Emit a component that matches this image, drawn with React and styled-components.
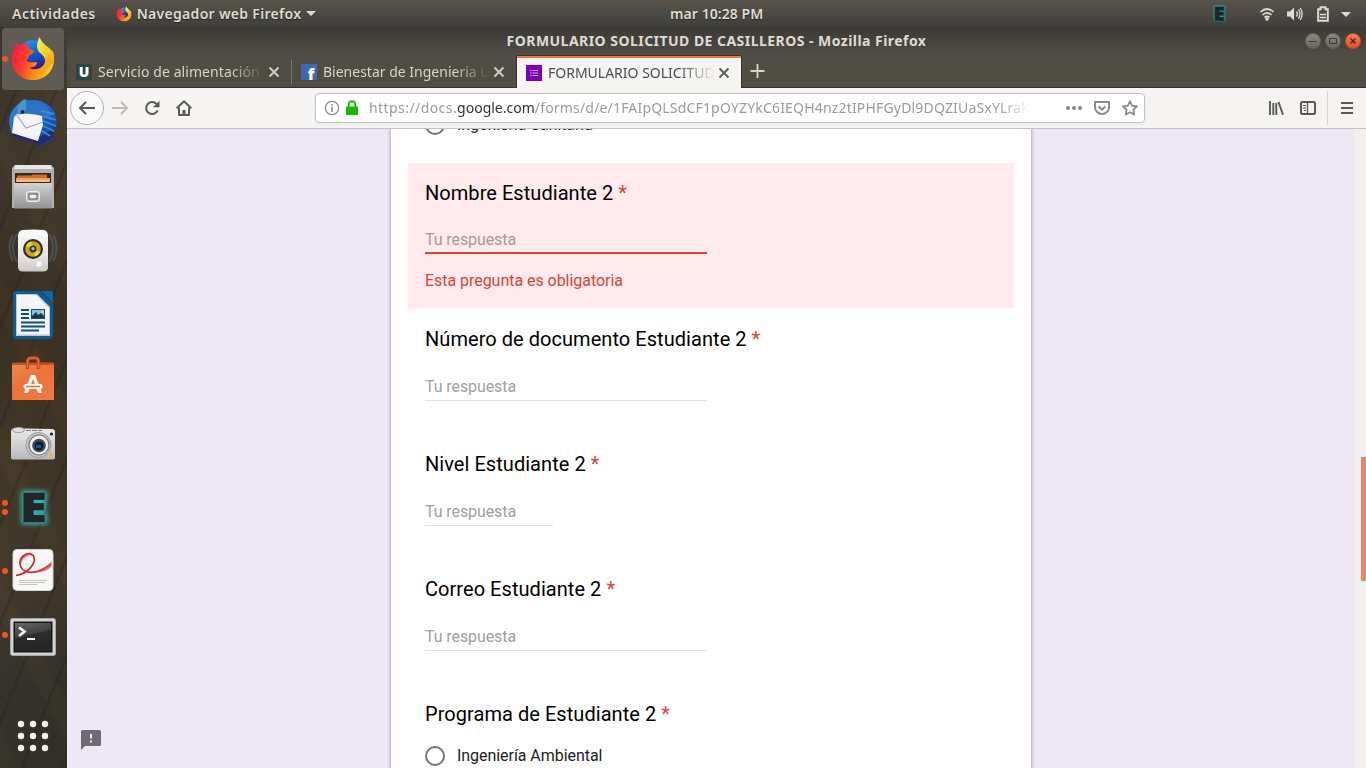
import React from "react";
import styled, { createGlobalStyle } from "styled-components";

const GlobalStyle = createGlobalStyle`
  * { box-sizing: border-box; }
  html, body { margin: 0; padding: 0; overflow: hidden; }
  body { font-family: "Noto Sans", "Open Sans", sans-serif; }
  svg { display: block; flex: none; overflow: visible; }
`;

const Desktop = styled.div`
  display: flex;
  flex-direction: column;
  width: 1366px;
  height: 768px;
  overflow: hidden;
  background: #3d362c;
`;

const TopPanel = styled.header`
  display: grid;
  grid-template-columns: 670px auto 1fr;
  flex: none;
  height: 27px;
  align-items: center;
  background: linear-gradient(#59554c, #403f3a);
  color: #dfdbd2;
  font-size: 14px;
  font-weight: 600;
  line-height: 26px;
  text-shadow: 0 1px 1px rgba(0, 0, 0, 0.5);
`;

const PanelLeft = styled.div`
  display: flex;
  align-items: center;
  padding-left: 12px;
`;

const PanelRight = styled.div`
  display: flex;
  justify-content: flex-end;
  padding-right: 14px;
`;

const Label = styled.span`
  white-space: nowrap;
  letter-spacing: ${(p) => p.$track || 0}px;
`;

const AppMenu = styled.div`
  display: flex;
  align-items: center;
  gap: 5px;
  margin-left: 20px;
`;

const Workspace = styled.div`
  display: flex;
  flex: 1;
  min-height: 0;
`;

const Dock = styled.nav`
  display: flex;
  flex-direction: column;
  width: 67px;
  background: repeating-linear-gradient(112deg, rgba(20, 16, 10, 0.16) 0 2px, transparent 4px 37px),
    repeating-linear-gradient(62deg, rgba(110, 82, 46, 0.1) 0 14px, transparent 22px 71px),
    linear-gradient(100deg, rgba(20, 18, 14, 0.15), transparent 45%, rgba(20, 18, 14, 0.15)),
    linear-gradient(#453e33 0%, #43392c 22%, #3b3124 38%, #423727 60%, #443a2c 76%, #36352d 88%, #35332c 100%);
`;

const DockItem = styled.div`
  display: flex;
  align-items: center;
  height: 64px;
  flex: none;
  margin-top: ${(p) => p.$gap || 0}px;
`;

const DockTile = styled.div`
  display: flex;
  align-items: center;
  justify-content: center;
  position: relative;
  width: 62px;
  height: 62px;
  margin: 0 3px 0 2px;
  border-radius: 4px;
  background: ${(p) => (p.$active ? "#605c56" : "transparent")};
`;

const Dots = styled.div`
  position: absolute;
  left: 0;
  top: 0;
  height: 62px;
  display: flex;
  flex-direction: column;
  justify-content: center;
  gap: 3px;
`;

const Dot = styled.i`
  width: 6px;
  height: 6px;
  border-radius: 50%;
  background: #f05423;
`;

const Window = styled.main`
  display: flex;
  flex-direction: column;
  flex: 1;
  min-width: 0;
`;

const TitleBar = styled.div`
  display: flex;
  align-items: center;
  height: 28px;
  flex: none;
  background: linear-gradient(#3b3a36, #504d45);
  color: #dfdbd2;
  font-size: 14px;
  font-weight: 700;
`;

const WindowTitle = styled.div`
  flex: 1;
  padding-left: 61px;
  text-align: center;
  line-height: 28px;
`;

const WindowButtons = styled.div`
  display: flex;
  gap: 4px;
  padding: 0 5px 0 0;
`;

const WindowButton = styled.div`
  width: 16px;
  height: 16px;
  border-radius: 50%;
  border: 1px solid ${(p) => (p.$close ? "#ce4a20" : "#66635b")};
  background: ${(p) => (p.$close ? "linear-gradient(#fb8059, #e9501f)" : "linear-gradient(#8b887f, #69665f)")};
`;

const TabStrip = styled.div`
  display: flex;
  height: 33px;
  flex: none;
  background: #504d45;
  border-bottom: 1px solid #34332f;
`;

const Tab = styled.div`
  display: flex;
  align-items: center;
  width: ${(p) => (p.$active ? 224 : 225)}px;
  height: 32px;
  padding: 1px 11px 0 9px;
  color: #d8d4cb;
  ${(p) => p.$active && `
    height: 32px;
    margin-top: 1px;
    padding: 0 10px 1px 9px;
    color: #4c4c4c;
    background: #f5f4f2;
    border-top: 2px solid #f07746;
    box-shadow: 0 -1px #34332f, -1px 0 #34332f, 1px 0 #34332f;
  `}
`;

const TabDivider = styled.i`
  width: 1px;
  height: 24px;
  margin: 5px 0 0 -1px;
  background: #79766e;
`;

const TabTitle = styled.div`
  flex: 1;
  margin-left: 6px;
  overflow: hidden;
  white-space: nowrap;
  font-size: 14px;
  line-height: 22px;
  letter-spacing: ${(p) => p.$track || 0}px;
  mask-image: linear-gradient(to right, #000 calc(100% - 38px), transparent calc(100% - 2px));
`;

const Favicon = styled.div`
  display: flex;
  align-items: flex-end;
  justify-content: center;
  width: 16px;
  height: 16px;
  background: ${(p) => p.$bg};
`;

const Toolbar = styled.div`
  display: flex;
  align-items: center;
  height: 41px;
  flex: none;
  background: #f5f4f2;
  border-bottom: 1px solid #c6c3bf;
  color: #5a5955;
`;

const BackButton = styled.div`
  display: flex;
  align-items: center;
  justify-content: center;
  width: 34px;
  height: 34px;
  margin-left: 3px;
  border-radius: 50%;
  border: 1px solid #b3b0ac;
  background: #fbfafa;
`;

const ToolButton = styled.div`
  display: flex;
  align-items: center;
  justify-content: center;
  width: 32px;
  height: 32px;
  color: ${(p) => (p.$disabled ? "#bdbbb8" : "inherit")};
`;

const UrlBar = styled.div`
  display: flex;
  align-items: center;
  gap: 5px;
  width: 830px;
  height: 30px;
  margin-left: 115px;
  padding: 0 6px 0 8px;
  background: #fff;
  border: 1px solid #c5c2be;
  border-radius: 4px;
  box-shadow: 0 1px 3px rgba(0, 0, 0, 0.06);
`;

const Url = styled.div`
  display: flex;
  width: 661px;
  margin-left: 5px;
  overflow: hidden;
  white-space: nowrap;
  font-size: 14px;
  line-height: 24px;
  color: #9b9b9b;
  mask-image: linear-gradient(to right, #000 calc(100% - 30px), transparent);
  b { font-weight: 400; color: #2e3436; }
`;

const UrlActions = styled.div`
  display: flex;
  align-items: center;
  gap: 12px;
  margin-left: auto;
  color: #8a8a8a;
`;

const ToolbarEnd = styled.div`
  display: flex;
  align-items: center;
  margin-left: auto;
  padding-right: 3px;
`;

const ToolDivider = styled.i`
  width: 1px;
  height: 34px;
  margin: 0 3px;
  background: #d7d4d1;
`;

const Viewport = styled.div`
  position: relative;
  display: flex;
  flex: 1;
  min-height: 0;
  background: #ede7f6;
  font-family: Roboto, sans-serif;
`;

const Page = styled.div`
  display: flex;
  flex: 1;
  padding-left: 324px;
  overflow: hidden;
`;

const FormCard = styled.section`
  width: 640px;
  height: 660px;
  margin-top: -10px;
  padding: 10px 17px 0;
  background: #fff;
  box-shadow: 0 1px 4px rgba(40, 20, 70, 0.45);
`;

const ScrollTrack = styled.div`
  display: flex;
  justify-content: flex-end;
  width: 12px;
  background: #f2f1ef;
`;

const ScrollThumb = styled.div`
  width: 5px;
  height: 124px;
  margin-top: 328px;
  background: #ee8562;
`;

const Question = styled.div`
  height: ${(p) => (p.$error ? 145 : 125)}px;
  margin-bottom: ${(p) => (p.$error ? 1 : 0)}px;
  padding: 17px 17px 0;
  background: ${(p) => (p.$error ? "#ffebee" : "transparent")};
`;

const QuestionTitle = styled.h2`
  margin: 0;
  font-size: 20px;
  line-height: 27px;
  font-weight: 400;
  letter-spacing: 0.05px;
  color: #000;
  span { color: #db4437; }
`;

const Answer = styled.div`
  width: ${(p) => p.$width || 282}px;
  height: 26px;
  margin-top: ${(p) => (p.$error ? 21 : 22)}px;
  font-size: 16px;
  line-height: 24px;
  letter-spacing: -0.09px;
  color: ${(p) => (p.$error ? "#a5999b" : "#a1a1a1")};
  border-bottom: ${(p) => (p.$error ? "2px solid #db4437" : "1px solid #e0e0e0")};
`;

const ErrorText = styled.div`
  margin-top: 15px;
  font-size: 16px;
  line-height: 24px;
  letter-spacing: -0.04px;
  color: #db4437;
`;

const Option = styled.div`
  display: flex;
  align-items: center;
  gap: 12px;
  height: 20px;
  margin: ${(p) => p.$margin};
  font-size: 16px;
  line-height: 20px;
  letter-spacing: -0.05px;
  color: #212121;
`;

const Radio = styled.i`
  width: 20px;
  height: 20px;
  border: 2px solid #757575;
  border-radius: 50%;
`;

const Feedback = styled.div`
  position: absolute;
  left: 14px;
  bottom: 18px;
`;

function FirefoxLogo({ size }) {
  return (
    <svg width={size} height={size} viewBox="0 0 48 48">
      <defs>
        <linearGradient id="ffBody" x1="0" y1="0.2" x2="1" y2="0.5">
          <stop offset="0" stopColor="#ff1744" />
          <stop offset="0.35" stopColor="#ff3d2e" />
          <stop offset="0.65" stopColor="#ff8a16" />
          <stop offset="1" stopColor="#ffc81e" />
        </linearGradient>
        <linearGradient id="ffTail" x1="0" y1="0" x2="0.4" y2="1">
          <stop offset="0" stopColor="#fff36b" />
          <stop offset="0.5" stopColor="#ffd62e" />
          <stop offset="1" stopColor="#ff9a12" />
        </linearGradient>
        <linearGradient id="ffGlobe" x1="0.2" y1="0" x2="0.5" y2="1">
          <stop offset="0" stopColor="#16a0f2" />
          <stop offset="0.55" stopColor="#0859d0" />
          <stop offset="1" stopColor="#3a1a78" />
        </linearGradient>
      </defs>
      <circle cx="24" cy="20" r="15.5" fill="url(#ffGlobe)" />
      <path d="M8 6 C8 9 9 9 11 10 C14 8 18 8 20 10 L19 13 L25 15 C25 18 22 19 20 20 C20 22 19 24 17 25 C20 29 25 27 28 27 C29 30 25 33 20 33 C29 38 39 31 38 20 C40 14 45 18 46 24 C46 37 36 46 24 46 C11 46 2 36 2 25 C2 18 3 15 5 13 C5 10 6 8 8 6Z" fill="url(#ffBody)" />
      <path d="M31 1 C27 8 27 15 33 19 C39 24 37 31 31 36 C40 34 46 29 46 20 C46 13 34 11 31 1Z" fill="url(#ffTail)" />
    </svg>
  );
}

function Thunderbird() {
  return (
    <svg width="50" height="50" viewBox="0 0 50 50">
      <defs>
        <linearGradient id="tb" x1="0" y1="0" x2="1" y2="1">
          <stop offset="0" stopColor="#2a8bdc" />
          <stop offset="0.5" stopColor="#1f66be" />
          <stop offset="1" stopColor="#17307e" />
        </linearGradient>
      </defs>
      <path d="M19 1 L19 3 C35 -1 49 10 49 24 C49 29 46 33 43 35 L45 40 C42 42 39 46 31 49 L28 43 C18 42 8 40 3 34 L1 25 C1 14 7 6 19 1Z" fill="url(#tb)" />
      <path d="M5 33 C10 39 28 43 34 38 L44 32 L45 39 L39 43 L31 49 L27 43 C18 44 9 41 5 37Z" fill="#242a73" />
      <path d="M6 19 C9 15 14 14 20 14 L34 18 L35 27 L30 43 L4 35Z" fill="#f4f4f6" />
      <path d="M8 16 L18 30 L35 24" fill="none" stroke="#a5a7ae" strokeWidth="1.2" />
      <path d="M10 15 C10 6 17 0 28 3 C39 4 44 14 43 23 C38 16 29 17 10 15Z" fill="#2d72c4" />
      <path d="M17 1 C10 4 7 11 11 17 C18 15 20 8 17 1Z" fill="#4597d2" />
      <path d="M33 13 L46 16 M34 18 L48 22 M35 23 L48 28 M35 28 L46 33 M34 33 L42 38" stroke="#338fdb" strokeWidth="1.8" />
      <circle cx="14.500" cy="14" r="1.9" fill="#182a3a" />
    </svg>
  );
}

function Files() {
  return (
    <svg width="48" height="48" viewBox="0 0 48 48">
      <defs>
        <linearGradient id="cab" x1="0" y1="0" x2="0" y2="1">
          <stop offset="0" stopColor="#d2d2d2" />
          <stop offset="1" stopColor="#929292" />
        </linearGradient>
      </defs>
      <path d="M6 2h36l3 3v40H3V5Z" fill="#b0b0ae" />
      <path d="M6 2h36l1 4H5Z" fill="#e7e7e6" />
      <path d="M6 10h36v10H6Z" fill="#33271e" />
      <path d="M8 12.500h14l2-1h14v5H8Z" fill="#d36b21" />
      <path d="M7 15h34v4H7Z" fill="#f1a25c" />
      <path d="M8 17.500h32v1H8Z" fill="#f7d9b5" />
      <path d="M5 20h38v25.500H5Z" fill="url(#cab)" />
      <rect x="17.500" y="28.500" width="13" height="10" rx="2" fill="#c5c5c5" stroke="#eeeeee" />
      <rect x="20" y="31" width="8" height="5" fill="#eee" stroke="#555" strokeWidth="1" />
    </svg>
  );
}

function Rhythmbox() {
  return (
    <svg width="56" height="48" viewBox="0 0 56 48">
      <defs>
        <linearGradient id="spk" x1="0" y1="0" x2="0" y2="1">
          <stop offset="0" stopColor="#fbfbfb" />
          <stop offset="0.6" stopColor="#e6e6e4" />
          <stop offset="1" stopColor="#c9c9c7" />
        </linearGradient>
      </defs>
      <g fill="none" stroke="#5e7d9d" strokeWidth="2" opacity="0.38">
        <path d="M12 7 Q4 20 12 35 M8 8 Q1 20 8 34" />
        <path d="M44 7 Q52 20 44 35 M48 8 Q55 20 48 34" />
      </g>
      <path d="M17 3 Q28 2 39 3 Q43 4 43 9 V40 Q43 44.500 38 44.500 H18 Q13 44.500 13 40 V9 Q13 4 17 3Z" fill="url(#spk)" />
      <circle cx="28" cy="22" r="10" fill="#2e2e2c" />
      <circle cx="28" cy="22" r="7.8" fill="#c8a81a" />
      <path d="M28 22 L21 19 A7.6 7.6 0 0 1 26 14.6Z M28 22 L35 25 A7.6 7.6 0 0 1 30 29.4Z" fill="#e9d23c" />
      <circle cx="28" cy="22" r="3.6" fill="#3b3d42" />
      <circle cx="28" cy="21.500" r="1.500" fill="#b9bcc1" />
      <circle cx="34" cy="37" r="3.4" fill="#f8f8f8" stroke="#c5c5c3" strokeWidth="0.7" />
      <rect x="18.500" y="36" width="4" height="4" fill="none" stroke="#d6d6d4" />
    </svg>
  );
}

function Writer() {
  return (
    <svg width="48" height="52" viewBox="0 0 48 52">
      <path d="M7 2 H31 L44 15 V46 Q44 50 40 50 H8 Q4 50 4 46 V5 Q4 2 7 2Z" fill="#0d5d93" />
      <path d="M32 2 H42 Q44 2 44 4 V14Z" fill="#0b6aa8" />
      <path d="M7 5 H28 L41 18 V47 H7Z" fill="#c4c7c9" />
      <path d="M8 6 H27 L40 19 V45.500 H8Z" fill="#f3f4f5" />
      <path d="M12 21h8 M12 25h8 M12 29h8 M12 33.500h24 M12 37.500h24 M12 41.500h18" stroke="#0c4f7f" strokeWidth="1.8" />
      <rect x="22.500" y="20.500" width="13" height="9" fill="#8ac2e6" stroke="#0c4f7f" />
      <path d="M23 29 V27 L27 23 L29 26 L32 24 L35 27 V29Z" fill="#19384f" />
      <circle cx="33.500" cy="22.500" r="1.500" fill="#f4cf43" />
    </svg>
  );
}

function Software() {
  return (
    <svg width="48" height="48" viewBox="0 0 48 48">
      <defs>
        <linearGradient id="bag" x1="0" y1="0" x2="0.7" y2="1">
          <stop offset="0" stopColor="#e48c50" />
          <stop offset="0.5" stopColor="#ee7138" />
          <stop offset="1" stopColor="#f07a42" />
        </linearGradient>
      </defs>
      <path d="M3 8 L6 7.500 H42 L45 8 V45 H3Z" fill="#c94f22" />
      <path d="M3 10 H45 V45 H3Z" fill="url(#bag)" />
      <path d="M18.500 14 V7 Q18.500 3 22 3 H26 Q29.500 3 29.500 7 V14" fill="none" stroke="#b4481d" strokeWidth="3.4" />
      <path d="M18.500 13 V7 Q18.500 3 22 3 H26 Q29.500 3 29.500 7 V13" fill="none" stroke="#e56a3a" strokeWidth="1.6" />
      <text x="24" y="37.500" textAnchor="middle" fontFamily="Lato, sans-serif" fontWeight="900" fontSize="25" fill="#fff">A</text>
      <rect x="14.500" y="29" width="19" height="5" rx="2.400" fill="#fff" />
      <path d="M17 31.500h14" stroke="#e96f3b" strokeWidth="1.600" />
    </svg>
  );
}

function Camera() {
  return (
    <svg width="48" height="48" viewBox="0 0 48 48">
      <defs>
        <linearGradient id="cam" x1="0" y1="0" x2="0" y2="1">
          <stop offset="0" stopColor="#ececec" />
          <stop offset="1" stopColor="#b9b9bb" />
        </linearGradient>
      </defs>
      <path d="M3 10 Q9 7 15 9.500 L43 10 Q46 10 46 13 V38.500 Q46 40.500 43 40.500 H4 Q2 40.500 2 38.500 V12Z" fill="url(#cam)" />
      <ellipse cx="9.500" cy="11" rx="6" ry="2.600" fill="#dedede" stroke="#888" strokeWidth="0.8" />
      <path d="M17 11.500h16" stroke="#77777a" strokeWidth="1.200" strokeDasharray="5 1" />
      <circle cx="29.500" cy="26" r="12.500" fill="#c7c8ca" stroke="#929396" strokeWidth="0.9" />
      <circle cx="30" cy="26" r="10" fill="#eeeeef" stroke="#77797d" strokeWidth="1.200" />
      <circle cx="30" cy="26.500" r="6.800" fill="#454b54" />
      <circle cx="30" cy="27" r="4.500" fill="#101c35" />
      <path d="M27 26h5v3h-5Z" fill="#1d4f9b" />
      <circle cx="42.500" cy="15" r="1.600" fill="#222" />
      <rect x="40" y="34.500" width="3" height="3" fill="#eeb02f" />
    </svg>
  );
}

function GlowE({ size }) {
  return (
    <svg width={size} height={size} viewBox="0 0 48 48">
      <defs>
        <filter id="glow" x="-40%" y="-40%" width="180%" height="180%">
          <feGaussianBlur stdDeviation="2.2" />
        </filter>
      </defs>
      <g transform="translate(24.500 39) scale(1.17 1)" fontFamily="Open Sans, sans-serif" fontWeight="800" fontSize="41" textAnchor="middle">
        <text fill="#2cc5c5" stroke="#2cb5b5" strokeWidth="4.500" filter="url(#glow)">E</text>
        <text fill="#222628" stroke="#222628" strokeWidth="0.7">E</text>
      </g>
    </svg>
  );
}

function DocumentViewer() {
  return (
    <svg width="48" height="48" viewBox="0 0 48 48">
      <rect x="4" y="2.500" width="40" height="41" rx="4" fill="#f7f7f6" stroke="#d5d5d3" />
      <path d="M7 28.500 C18 27 27 17 25 10 C22 3 11 8 11 16 C11 25 24 31 42 17" fill="none" stroke="#d52228" strokeWidth="1.700" />
      <path d="M12 14 C14 7 22 4 25 9 C21 7 14 9 12 17Z M23 25 Q34 25 43 14 L42 20 Q35 27 23 25Z" fill="#df4a4c" opacity="0.75" />
      <path d="M10 33.500h28 M10 35.500h26 M10 37.500h18" stroke="#bcbcba" strokeWidth="0.9" />
    </svg>
  );
}

function Terminal() {
  return (
    <svg width="48" height="48" viewBox="0 0 48 48">
      <defs>
        <linearGradient id="term" x1="0" y1="0" x2="0.3" y2="1">
          <stop offset="0" stopColor="#666" />
          <stop offset="0.48" stopColor="#404142" />
          <stop offset="0.52" stopColor="#2c2d2e" />
          <stop offset="1" stopColor="#252627" />
        </linearGradient>
      </defs>
      <rect x="1.500" y="7.500" width="45" height="37" rx="2" fill="#d3d3d2" stroke="#a5a5a3" />
      <rect x="4.500" y="10.500" width="39" height="31" fill="#161717" />
      <rect x="6" y="12" width="36" height="28" fill="url(#term)" />
      <path d="M10 16.500 L15.500 20.500 L10 25" fill="none" stroke="#f4f4f4" strokeWidth="2.700" />
      <path d="M18 28h8" stroke="#f4f4f4" strokeWidth="2" />
    </svg>
  );
}

function AppGrid() {
  return (
    <svg width="48" height="48" viewBox="0 0 48 48" fill="#f3f2ef">
      {[12, 24, 36].map((y) => [12, 24, 36].map((x) => <circle key={`${x}-${y}`} cx={x} cy={y} r="3.2" />))}
    </svg>
  );
}

const dockApps = [
  { icon: <FirefoxLogo size={46} />, active: true, dots: 1 },
  { icon: <Thunderbird /> },
  { icon: <Files /> },
  { icon: <Rhythmbox /> },
  { icon: <Writer /> },
  { icon: <Software /> },
  { icon: <Camera /> },
  { icon: <GlowE size={48} />, dots: 2 },
  { icon: <DocumentViewer />, dots: 1 },
  { icon: <Terminal />, dots: 1 },
  { icon: <AppGrid />, gap: 37 },
];

function StatusIcons() {
  return (
    <svg width="144" height="26" viewBox="1208 0 144 26">
      <g transform="translate(1209 3)"><GlowE size={20} /></g>
      <g fill="none" stroke="#dfdbd2" strokeWidth="1.700">
        <path d="M1260.500 11 Q1267 5 1273.500 11" />
        <path d="M1262.500 14 Q1267 9.500 1271.500 14" />
        <path d="M1264.500 16.500 Q1267 14.200 1269.500 16.500" />
        <path d="M1296.500 10.500 Q1298.500 13 1296.500 15.700 M1298.500 8.500 Q1301.500 13 1298.500 17.600 M1300.300 7 Q1304 13 1300.300 19" strokeWidth="1.300" />
        <path d="M1318.200 8.200h2.300v-2h5v2h2.300v11.500h-9.600Z" strokeWidth="2" />
        <path d="M1320 13.500h6 M1320 16.500h6" />
      </g>
      <circle cx="1267" cy="18" r="1.800" fill="#dfdbd2" />
      <path d="M1287 10.500h3l4-4v13l-4-4h-3Z M1341 11h10l-5 5Z" fill="#dfdbd2" />
    </svg>
  );
}

function CloseIcon({ color }) {
  return (
    <svg width="14" height="14" viewBox="0 0 14 14">
      <path d="M2.500 2.500l9 9m0-9l-9 9" stroke={color} strokeWidth="1.900" />
    </svg>
  );
}

function Field({ title, width, error }) {
  return (
    <Question $error={error}>
      <QuestionTitle>{title} <span>*</span></QuestionTitle>
      <Answer $width={width} $error={error}>Tu respuesta</Answer>
      {error && <ErrorText>{error}</ErrorText>}
    </Question>
  );
}

export default function App() {
  return (
    <Desktop>
      <GlobalStyle />
      <TopPanel>
        <PanelLeft>
          <Label $track={0.47}>Actividades</Label>
          <AppMenu>
            <FirefoxLogo size={16} />
            <Label $track={0.3}>Navegador web Firefox</Label>
            <svg width="10" height="6" viewBox="0 0 10 6"><path d="M0 0h10L5 5Z" fill="#dfdbd2" /></svg>
          </AppMenu>
        </PanelLeft>
        <Label $track={0.07}>mar 10:28 PM</Label>
        <PanelRight><StatusIcons /></PanelRight>
      </TopPanel>
      <Workspace>
        <Dock>
          {dockApps.map((app, i) => (
            <DockItem key={i} $gap={app.gap}>
              <DockTile $active={app.active}>
                {app.dots && <Dots>{Array.from({ length: app.dots }, (_, d) => <Dot key={d} />)}</Dots>}
                {app.icon}
              </DockTile>
            </DockItem>
          ))}
        </Dock>
        <Window>
          <TitleBar>
            <WindowTitle><Label $track={0.46}>FORMULARIO SOLICITUD DE CASILLEROS - Mozilla Firefox</Label></WindowTitle>
            <WindowButtons>
              <WindowButton><svg width="14" height="14" viewBox="0 0 14 14"><path d="M3 7.500h8" stroke="#3b3a36" /></svg></WindowButton>
              <WindowButton><svg width="14" height="14" viewBox="0 0 14 14"><path d="M3.500 4.500h7v5h-7Z" stroke="#3b3a36" fill="none" /></svg></WindowButton>
              <WindowButton $close><svg width="14" height="14" viewBox="0 0 14 14"><path d="M4.500 4.500l5 5m0-5l-5 5" stroke="#4a2418" strokeWidth="1.400" /></svg></WindowButton>
            </WindowButtons>
          </TitleBar>
          <TabStrip>
            <Tab>
              <Favicon $bg="#29493f">
                <svg width="16" height="16" viewBox="0 0 16 16"><text x="8" y="13" textAnchor="middle" fontFamily="Open Sans" fontWeight="800" fontSize="14" fill="#fff">U</text></svg>
              </Favicon>
              <TabTitle $track={0.08}>Servicio de alimentación</TabTitle>
              <CloseIcon color="#d0cdc5" />
            </Tab>
            <TabDivider />
            <Tab>
              <Favicon $bg="#4267b2">
                <svg width="16" height="16" viewBox="0 0 16 16"><text x="10" y="15.500" textAnchor="middle" fontFamily="Open Sans" fontWeight="800" fontSize="16" fill="#fff">f</text></svg>
              </Favicon>
              <TabTitle>Bienestar de Ingenieria U</TabTitle>
              <CloseIcon color="#d0cdc5" />
            </Tab>
            <Tab $active>
              <Favicon $bg="#7c00b9">
                <svg width="16" height="16" viewBox="0 0 16 16"><path d="M4 5.500h1.500M4 8h1.500M4 10.500h1.500M6.500 5.500h5.500M6.500 8h5.500M6.500 10.500h5.500" stroke="#d3a6ea" strokeWidth="1.200" /></svg>
              </Favicon>
              <TabTitle>FORMULARIO SOLICITUD</TabTitle>
              <CloseIcon color="#5c5b58" />
            </Tab>
            <svg width="32" height="32" viewBox="0 0 32 32"><path d="M16.500 9v14M9.500 16h14" stroke="#d8d4cb" strokeWidth="1.800" /></svg>
          </TabStrip>
          <Toolbar>
            <BackButton>
              <svg width="18" height="18" viewBox="0 0 18 18"><path d="M17 9H2.500M8 3L2 9l6 6" fill="none" stroke="currentColor" strokeWidth="2" /></svg>
            </BackButton>
            <ToolButton $disabled>
              <svg width="18" height="18" viewBox="0 0 18 18"><path d="M1 9h14.500M10 3l6 6-6 6" fill="none" stroke="currentColor" strokeWidth="2" /></svg>
            </ToolButton>
            <ToolButton>
              <svg width="16" height="16" viewBox="0 0 16 16"><path d="M13.600 10.500A6 6 0 1 1 12.500 4" fill="none" stroke="currentColor" strokeWidth="2" /><path d="M15.500 0.700v6.600H8.900Z" fill="currentColor" /></svg>
            </ToolButton>
            <ToolButton>
              <svg width="16" height="16" viewBox="0 0 16 16"><path d="M0.800 8.300L8 1.200l7.200 7.100M3 7.500V15h10V7.500" fill="none" stroke="currentColor" strokeWidth="2" strokeLinejoin="round" /><path d="M6.500 15v-5h3v5Z" fill="currentColor" /></svg>
            </ToolButton>
            <UrlBar>
              <svg width="16" height="16" viewBox="0 0 16 16" fill="none" stroke="#8a8a8a"><circle cx="8" cy="8" r="6.700" strokeWidth="1.200" /><path d="M8 7v5M8 4v1.700" strokeWidth="1.600" /></svg>
              <svg width="14" height="16" viewBox="0 0 14 16"><path d="M3.700 8V4.500a3.300 3.300 0 0 1 6.600 0V8" fill="none" stroke="#12bc00" strokeWidth="2" /><rect x="1" y="6.500" width="12" height="8.500" rx="1" fill="#12bc00" /></svg>
              <Url>
                <Label $track={0.43}>https://docs.</Label>
                <Label as="b">google.com</Label>
                <Label $track={0.18}>/forms/d/e/1FAIpQLSdCF1pOYZYkC6IEQH4nz2tIPHFGyDl9DQZIUaSxYLrak</Label>
              </Url>
              <UrlActions>
                <svg width="16" height="16" viewBox="0 0 16 16" fill="currentColor"><circle cx="2" cy="8" r="2" /><circle cx="8" cy="8" r="2" /><circle cx="14" cy="8" r="2" /></svg>
                <svg width="16" height="16" viewBox="0 0 16 16" fill="none" stroke="currentColor" strokeWidth="2"><path d="M1 2h14v5.500a7 6.500 0 0 1-14 0Z" strokeLinejoin="round" /><path d="M4.500 6.300L8 9.700l3.500-3.400" /></svg>
                <svg width="16" height="16" viewBox="0 0 16 16" fill="none" stroke="currentColor" strokeWidth="1.700"><path d="M8 1.200l2.100 4.500 4.900.6-3.600 3.400.9 4.900L8 12.200l-4.300 2.400.9-4.900L1 6.300l4.900-.6Z" strokeLinejoin="round" /></svg>
              </UrlActions>
            </UrlBar>
            <ToolbarEnd>
              <ToolButton><svg width="16" height="16" viewBox="0 0 16 16" stroke="currentColor" strokeWidth="1.900"><path d="M2 1v14M5.300 3v12M8.300 3v12M10.500 2l4.500 12.700" /></svg></ToolButton>
              <ToolButton><svg width="16" height="16" viewBox="0 0 16 16" stroke="currentColor" fill="none"><rect x="1" y="2" width="14" height="12" rx="1.500" strokeWidth="2" /><path d="M7.500 2v12" strokeWidth="1.300" /><path d="M3 5.500h3M3 8h3M4 10.500h2" /></svg></ToolButton>
              <ToolDivider />
              <ToolButton><svg width="12" height="16" viewBox="0 0 12 16" stroke="currentColor" strokeWidth="2"><path d="M0 3h12M0 8h12M0 13h12" /></svg></ToolButton>
            </ToolbarEnd>
          </Toolbar>
          <Viewport>
            <Page>
              <FormCard>
                <Option $margin="-14px 17px 28px"><Radio />Ingeniería Sanitaria</Option>
                <Field title="Nombre Estudiante 2" error="Esta pregunta es obligatoria" />
                <Field title="Número de documento Estudiante 2" />
                <Field title="Nivel Estudiante 2" width={128} />
                <Field title="Correo Estudiante 2" />
                <Question>
                  <QuestionTitle>Programa de Estudiante 2 <span>*</span></QuestionTitle>
                  <Option $margin="18px 0 0"><Radio />Ingeniería Ambiental</Option>
                </Question>
              </FormCard>
            </Page>
            <ScrollTrack><ScrollThumb /></ScrollTrack>
            <Feedback>
              <svg width="20" height="20" viewBox="0 0 20 20"><path d="M1.500 0h17Q20 0 20 1.500v13Q20 16 18.500 16H4l-4 4V1.500Q0 0 1.500 0Z" fill="#6e6b75" /><path d="M10 4v4.500M10 10.500v2" stroke="#ede7f6" strokeWidth="2" /></svg>
            </Feedback>
          </Viewport>
        </Window>
      </Workspace>
    </Desktop>
  );
}
